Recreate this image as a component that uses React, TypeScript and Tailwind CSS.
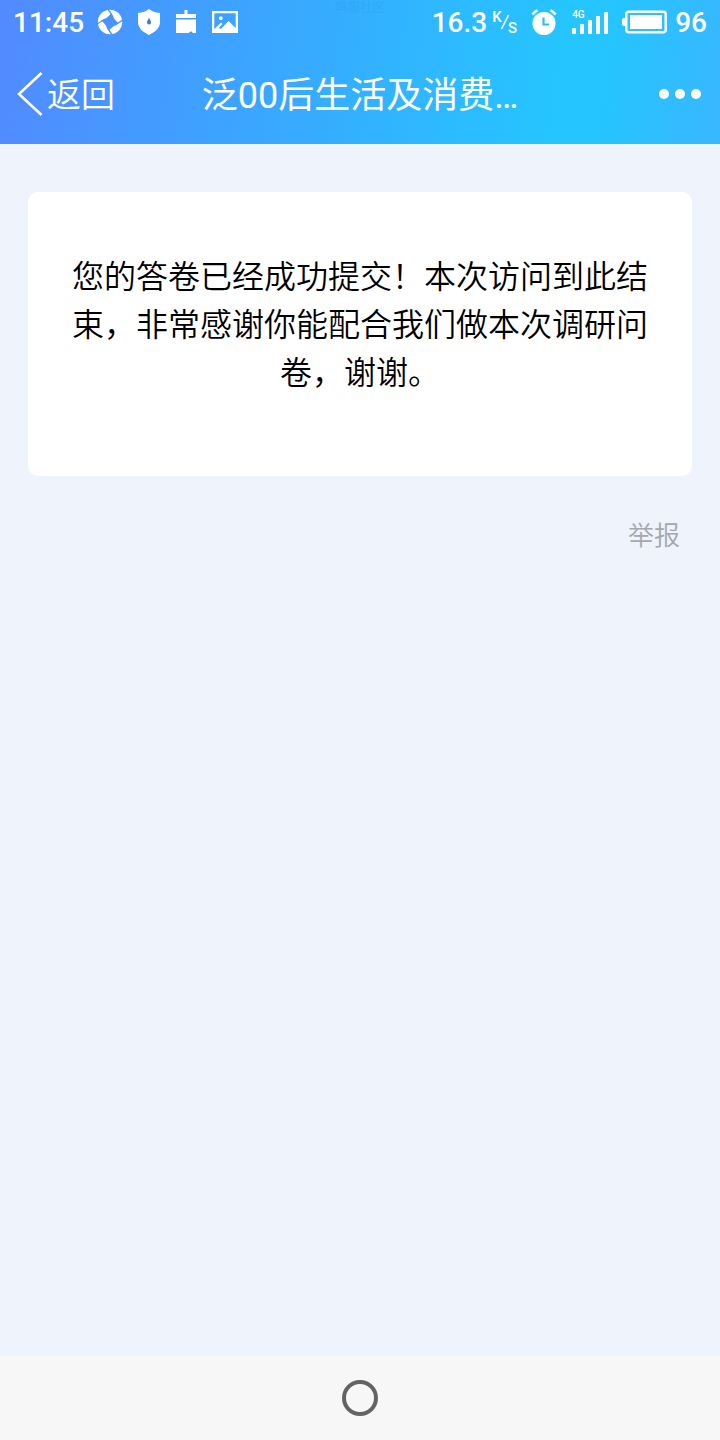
const message = "您的答卷已经成功提交！本次访问到此结束，非常感谢你能配合我们做本次调研问卷，谢谢。";

function StatusIcons() {
  return (
    <div className="flex items-center">
      {/* Shutter */}
      <svg className="ml-[13px]" width="26" height="26" viewBox="0 0 26 26">
        <circle cx="13" cy="13" r="12.200" fill="#fff" />
        <path d="M14.500 5.500Q16 10.500 20.500 14.500 15.500 16 11.500 20.500 10 15.500 5.500 11.500 10.500 10 14.500 5.500Z" fill="#4a93ff" stroke="#4a93ff" strokeWidth="1.500" />
        <path d="M14.500 6.500Q13.500 3 11 .5M19.500 14.500Q23 13.500 25.500 11M11.500 19.500Q12.500 23 15 25.500M6.500 11.500Q3 12.500 .5 15" fill="none" stroke="#4a93ff" strokeWidth="1.300" />
      </svg>
      {/* Shield */}
      <svg className="ml-[14px]" width="24" height="26" viewBox="0 0 24 26">
        <path d="M12 0Q16 3.500 23 4v9c0 6-5 10-11 13C6 23 1 19 1 13V4Q8 3.500 12 0Z" fill="#fff" />
        <path d="M12 8.500c.6 2 2 3.300 2 5a2 2 0 0 1-4 0c0-1.700 1.400-3 2-5Z" fill="#3b7ed6" />
      </svg>
      {/* Cleaner */}
      <svg className="ml-[15px]" width="20" height="24" viewBox="0 0 20 24" fill="#fff">
        <path d="M8.500 0h3v4H20v4H0V4h8.500ZM0 9.500h20V23h-3.500c0-2-3-2-3.500 0H0Z" />
      </svg>
      {/* Picture */}
      <svg className="ml-4" width="26" height="22" viewBox="0 0 26 22" fill="#fff">
        <path d="M0 0h26v22H0ZM2.300 2.300v16L9 11.500l1.500 1.500L7 17l2 1 7.500-8 7.200 7V2.300Z" fillRule="evenodd" />
        <rect x="7" y="5.500" width="3.500" height="3.500" rx="1" />
      </svg>
    </div>
  );
}

function StatusBar() {
  return (
    <div className="flex h-11 items-center justify-between pl-[13px] pr-[13px] font-['Roboto',sans-serif] text-[28px] font-medium leading-none">
      <div className="flex items-center">
        <span className="pt-0.5">11:45</span>
        <StatusIcons />
      </div>
      <div className="flex items-center">
        <span className="pt-0.5">16.3</span>
        <span className="relative ml-[5px] h-7 w-[25px] text-[15px]">
          <span className="absolute left-0 top-[2px]">K</span>
          <svg className="absolute left-[8px] top-[6px]" width="10" height="18" viewBox="0 0 10 18" stroke="#fff" strokeWidth="1.600">
            <path d="M8.500 1 1.500 15" />
          </svg>
          <span className="absolute bottom-0 right-0">S</span>
        </span>
        {/* Alarm */}
        <svg className="ml-[14px]" width="26" height="26" viewBox="0 0 26 26">
          <circle cx="13" cy="14.500" r="11.500" fill="#fff" />
          <path d="M1.500 5.500Q3.500 2.500 6.500 1.500M24.500 5.500Q22.500 2.500 19.500 1.500" fill="none" stroke="#fff" strokeWidth="2.600" />
          <path d="M12.500 8.500V15.500H18" fill="none" stroke="#2abfff" strokeWidth="2.200" />
        </svg>
        {/* Signal */}
        <div className="relative ml-[15px] flex h-[23px] w-9 items-end justify-between">
          <span className="absolute -top-px left-0 text-[10px] leading-none">4G</span>
          <i className="h-[6px] w-1 rounded-[1px] bg-white" />
          <i className="h-[10px] w-1 rounded-[1px] bg-white" />
          <i className="h-[14px] w-1 rounded-[1px] bg-white" />
          <i className="h-[18px] w-1 rounded-[1px] bg-white" />
          <i className="h-[22px] w-1 rounded-[1px] bg-white" />
        </div>
        {/* Battery */}
        <svg className="ml-[14px]" width="45" height="24" viewBox="0 0 45 24" fill="#fff">
          <rect x="4.300" y="1.800" width="39.400" height="20.400" rx="2.500" fill="none" stroke="#fff" strokeWidth="2.400" />
          <rect x="8" y="5" width="32" height="14" />
          <path d="M3.500 8H2Q0 8 0 10v4q0 2 2 2h1.500Z" />
        </svg>
        <span className="ml-2 pt-0.5">96</span>
      </div>
    </div>
  );
}

export default function App() {
  return (
    <div className="flex h-[1440px] w-[720px] flex-col bg-[#eff3fb] font-['Noto_Sans_CJK_SC',sans-serif] font-[350]">
      <header className="relative h-36 bg-[linear-gradient(98deg,#528aff_0%,#3ba5ff_35%,#25c5ff_77%,#25c5ff_83%,#3ab7ff_100%)] text-white">
        <span className="absolute left-[335px] top-0 text-[12.500px] leading-[14px] text-[#2a9af0]/40">鸣服社区</span>
        <StatusBar />
        <div className="grid h-[100px] grid-cols-[1fr_auto_1fr] items-center pl-[17px] pr-[19px]">
          <div className="flex items-center">
            <svg width="26" height="44" viewBox="0 0 26 44" fill="none" stroke="#fff" strokeWidth="2.600">
              <path d="M24.500 1 2 22 24.500 43" />
            </svg>
            <span className="ml-1 pb-[3px] text-[34px] leading-none">返回</span>
          </div>
          <h1 className="pl-0.5 pt-1 font-['Roboto','Noto_Sans_CJK_SC',sans-serif] text-[36px] font-normal leading-none">泛00后生活及消费…</h1>
          <div className="flex justify-end gap-[6px]">
            <i className="size-[10px] rounded-full bg-white" />
            <i className="size-[10px] rounded-full bg-white" />
            <i className="size-[10px] rounded-full bg-white" />
          </div>
        </div>
      </header>

      <main className="flex-1 px-7 pt-12">
        <div className="h-[284px] rounded-[10px] bg-white px-11 pt-[58px]">
          <p className="text-center text-[32px] leading-[48px] text-black">{message}</p>
        </div>
        <div className="mt-[38px] pr-3 text-right text-[26px] leading-[39px] text-[#a5a7ab]">举报</div>
      </main>

      {/* System navigation */}
      <nav className="flex h-[84px] items-center justify-center bg-[#f7f7f7]">
        <span className="size-9 rounded-full border-4 border-[#636363]" />
      </nav>
    </div>
  );
}
